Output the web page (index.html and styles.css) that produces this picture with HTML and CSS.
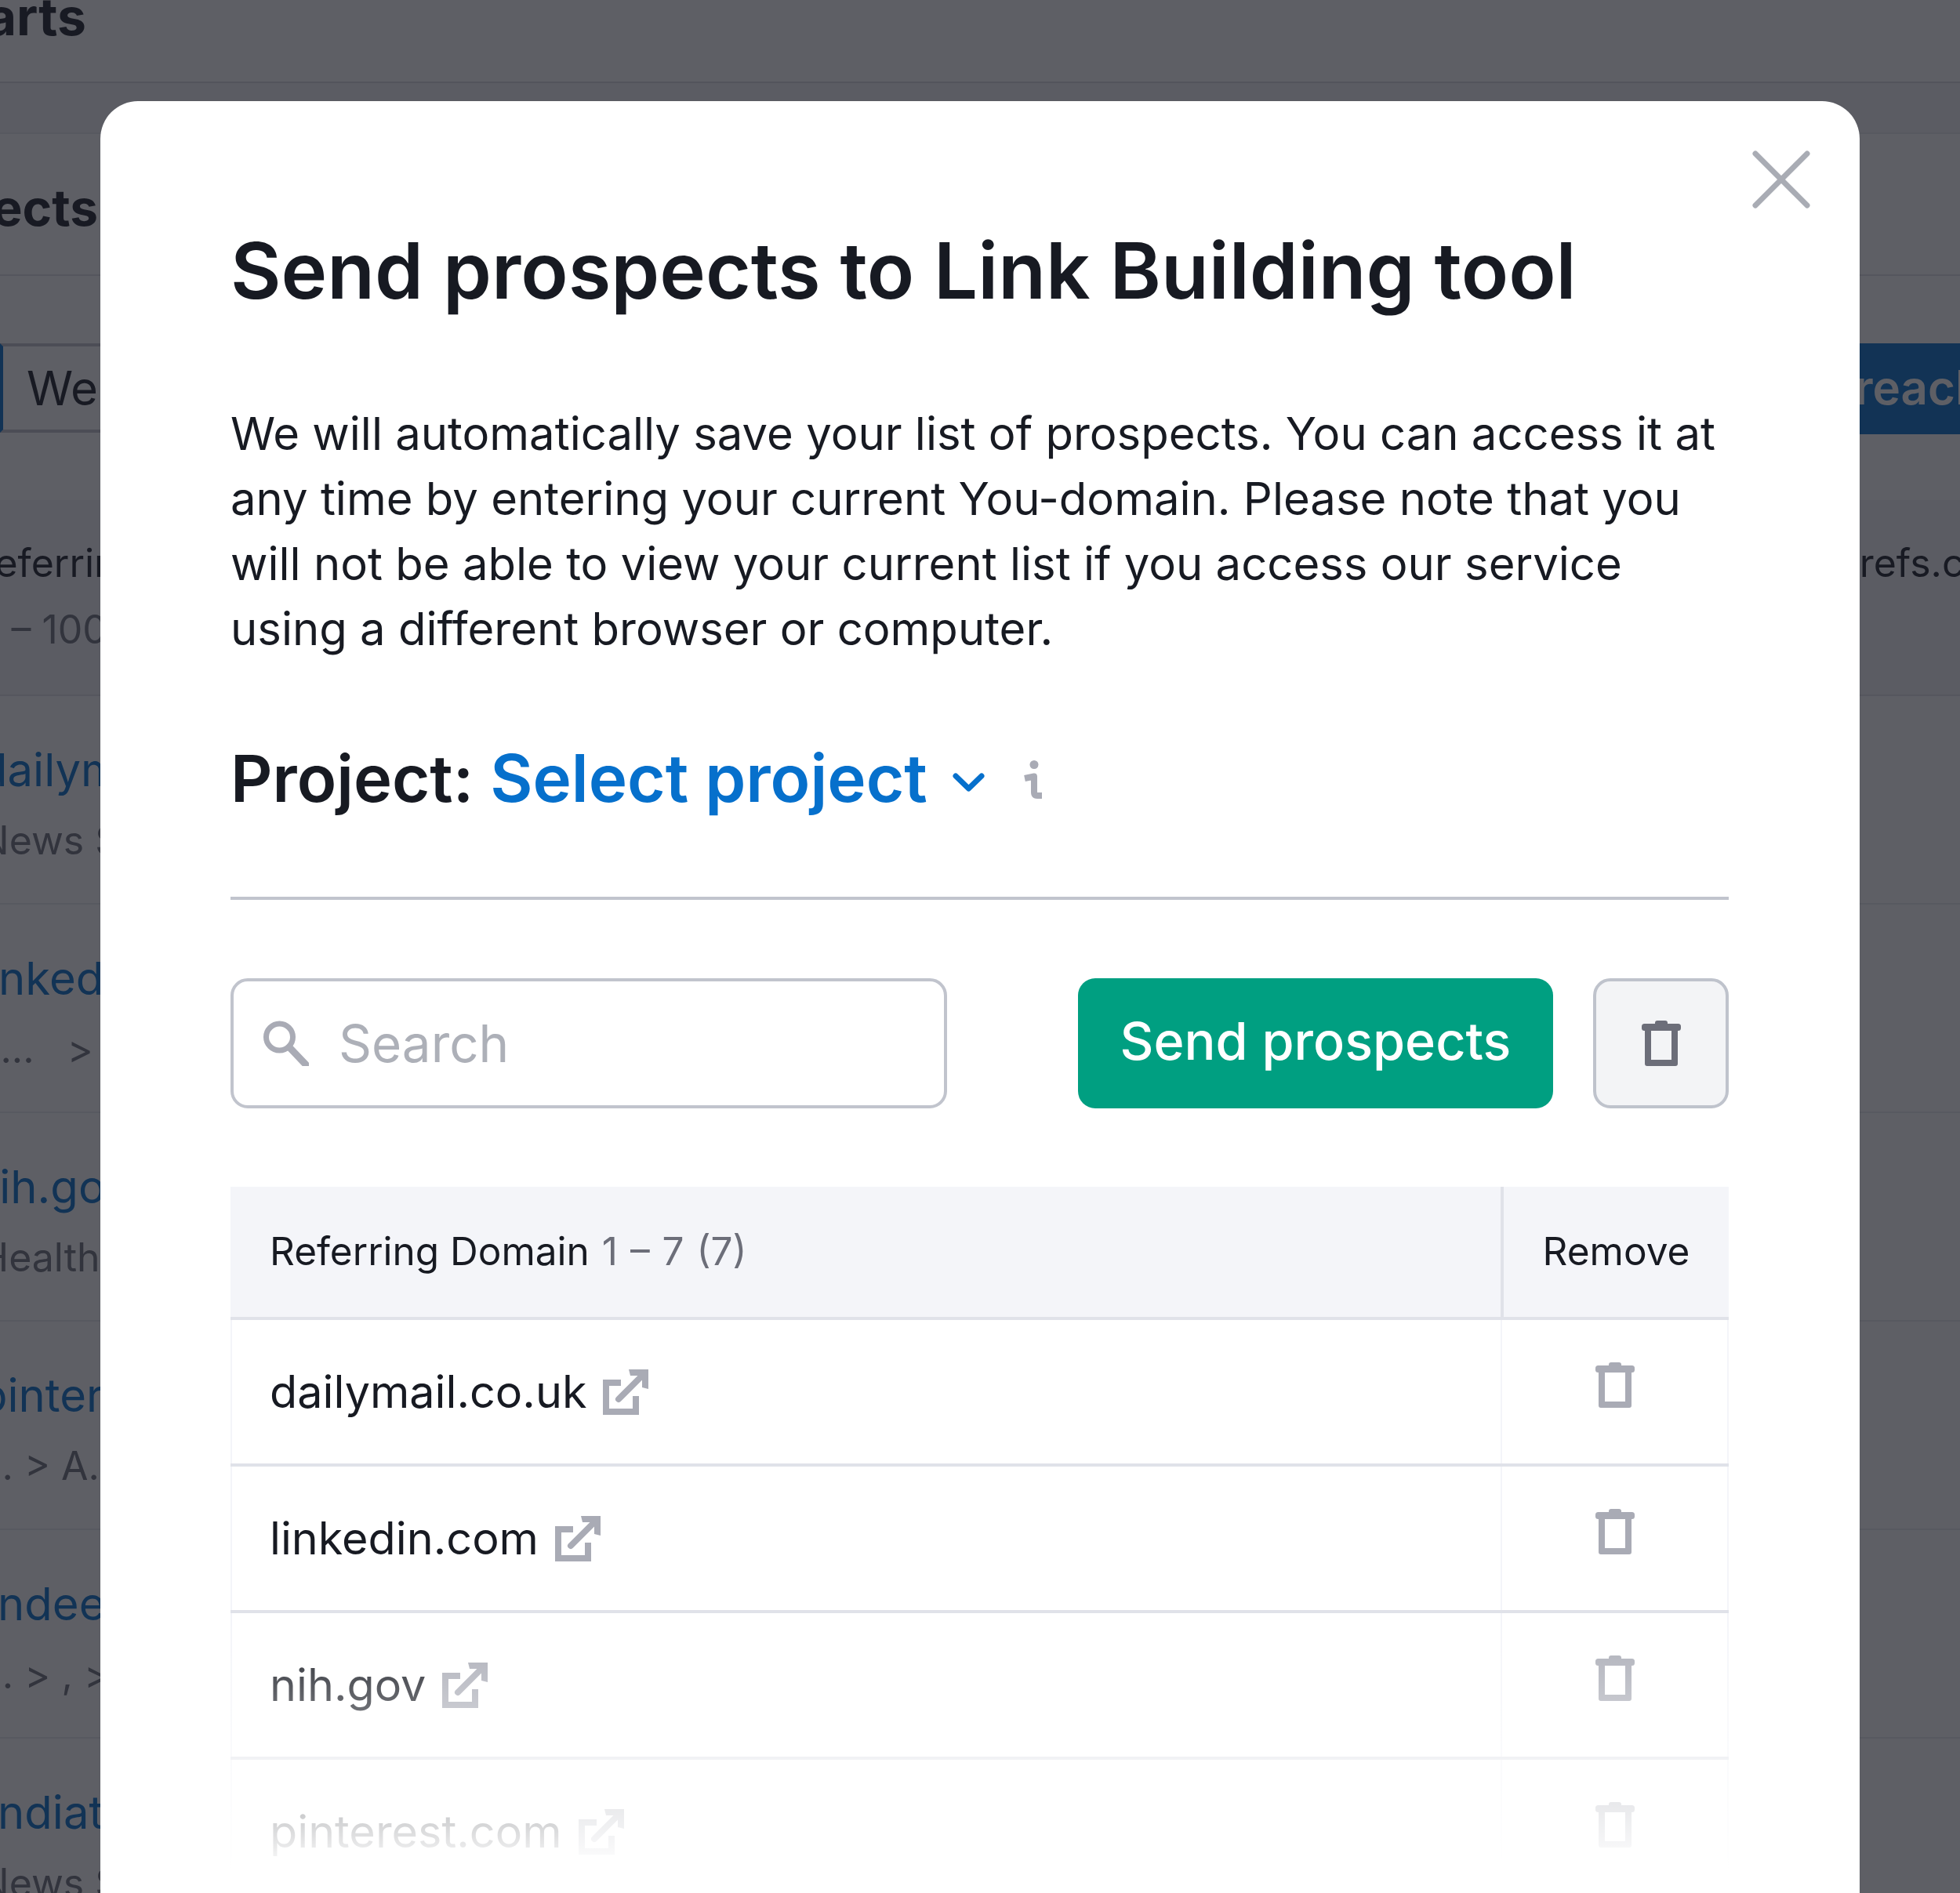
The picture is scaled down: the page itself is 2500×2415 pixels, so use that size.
FILE: index.html
```html
<!DOCTYPE html>
<html lang="en">
<head>
<meta charset="utf-8">
<title>Send prospects to Link Building tool</title>
<link rel="stylesheet" href="styles.css">
</head>
<body>
<svg class="defs" width="0" height="0" aria-hidden="true">
  <symbol id="trash" viewBox="0 0 50 58">
    <rect x="17" y="0" width="16" height="9" rx="3"/>
    <rect x="0" y="4" width="50" height="9" rx="3.5"/>
    <path fill-rule="evenodd" d="M4 10h42v45a3 3 0 0 1-3 3H7a3 3 0 0 1-3-3zM12 13v37h26V13z"/>
  </symbol>
  <symbol id="ext" viewBox="0 0 58 58">
    <path d="M23 17H4v37h38V34" fill="none" stroke="currentColor" stroke-width="8"/>
    <path d="M20 38 48 10" fill="none" stroke="currentColor" stroke-width="8" stroke-linecap="round"/>
    <path d="M33 0h25v25l-8-2V8H35z"/>
  </symbol>
</svg>

<div class="page">
  <header class="page-head"><span class="h-arts">Backlink Charts</span></header>
  <div class="band-thin"></div>
  <section class="page-title"><span class="h-ects">Prospects</span></section>
  <section class="toolbar">
    <div class="fake-input"><span class="fake-value">Weak</span></div>
    <div class="fake-btn"><span>Outreach</span></div>
  </section>
  <section class="page-table-head">
    <div class="hd-left"><div class="hd-ref">Referring Domain</div><div class="hd-range">1 – 100</div></div>
    <div class="hd-right">ahrefs.com</div>
  </section>
  <div class="bg-row"><div class="lnk l1">dailymail.co.uk</div><div class="sub s1">News Sites</div></div>
  <div class="bg-row"><div class="lnk l2">linkedin.com</div><div class="sub s2">s...&nbsp;&nbsp;&nbsp;&gt;</div></div>
  <div class="bg-row"><div class="lnk l3">nih.gov</div><div class="sub s3">Health</div></div>
  <div class="bg-row"><div class="lnk l4">pinterest.com</div><div class="sub s4">S.. &gt; A..</div></div>
  <div class="bg-row"><div class="lnk l5">indeed.com</div><div class="sub s5">... &gt; , &gt;</div></div>
  <div class="bg-row"><div class="lnk l6">indiatimes.com</div><div class="sub s6">News Sites</div></div>
</div>

<div class="overlay">
  <div class="modal">
    <button class="close" aria-label="Close">
      <svg viewBox="0 0 74 74" width="74" height="74"><path d="M4 4 70 70M70 4 4 70"/></svg>
    </button>
    <h1 class="title">Send prospects to Link Building tool</h1>
    <p class="intro">We will automatically save your list of prospects. You can access it at<br>any time by entering your current You-domain. Please note that you<br>will not be able to view your current list if you access our service<br>using a different browser or computer.</p>
    <div class="project">
      <div class="project-row">
        <span class="project-label">Project:</span>
        <span class="project-value">Select project</span>
        <svg class="chev" viewBox="0 0 41 24" width="41" height="24"><path d="M4 4 20.5 20 37 4"/></svg>
        <svg class="info" viewBox="0 0 24 49" width="24" height="49"><circle cx="14" cy="5.5" r="5.5"/><path d="M2 23 14 20.500v20q0 4.500 4 4.500h6"/></svg>
      </div>
    </div>
    <div class="controls">
      <label class="search">
        <svg class="search-ico" viewBox="0 0 58 58" width="58" height="58"><circle cx="20.500" cy="21" r="17"/><path class="handle" d="M33 34 54 56"/></svg>
        <span class="search-ph">Search</span>
      </label>
      <button class="send">Send prospects</button>
      <button class="bin" aria-label="Remove all"><svg class="ico-trash" width="50" height="58"><use href="#trash"/></svg></button>
    </div>
    <div class="table">
      <div class="tr thead">
        <div class="td dom"><span>Referring Domain</span> <span class="range">1 – 7 (7)</span></div>
        <div class="td act">Remove</div>
      </div>
      <div class="tr">
        <div class="td dom"><span>dailymail.co.uk</span><svg class="ico-ext" width="58" height="58"><use href="#ext"/></svg></div>
        <div class="td act"><svg class="ico-row" width="50" height="58"><use href="#trash"/></svg></div>
      </div>
      <div class="tr">
        <div class="td dom"><span>linkedin.com</span><svg class="ico-ext" width="58" height="58"><use href="#ext"/></svg></div>
        <div class="td act"><svg class="ico-row" width="50" height="58"><use href="#trash"/></svg></div>
      </div>
      <div class="tr">
        <div class="td dom"><span>nih.gov</span><svg class="ico-ext" width="58" height="58"><use href="#ext"/></svg></div>
        <div class="td act"><svg class="ico-row" width="50" height="58"><use href="#trash"/></svg></div>
      </div>
      <div class="tr">
        <div class="td dom"><span>pinterest.com</span><svg class="ico-ext" width="58" height="58"><use href="#ext"/></svg></div>
        <div class="td act"><svg class="ico-row" width="50" height="58"><use href="#trash"/></svg></div>
      </div>
    </div>
    <div class="fade"></div>
  </div>
</div>
</body>
</html>
```
FILE: styles.css
```css
* { box-sizing: border-box; }
html, body { margin: 0; height: 100%; overflow: hidden; background: #fff; }
body { position: relative; font-family: Inter, "Liberation Sans", sans-serif; color: #171a22; }
.defs { position: absolute; }

/* page behind the dialog */
.page { height: 2415px; overflow: hidden; }
.page-head { height: 106px; border-bottom: 2px solid #d9dbe2; overflow: hidden; }
.h-arts { display: block; font-size: 66px; font-weight: 700; line-height: 90px; margin: -24px 0 0 -397px; white-space: nowrap; }
.band-thin { height: 65px; background: #f4f5f9; border-bottom: 2px solid #e8e9ef; }
.page-title { height: 181px; border-bottom: 2px solid #e0e2e8; overflow: hidden; }
.h-ects { display: block; font-size: 64px; font-weight: 700; line-height: 80px; padding-top: 54px; margin-left: -191px; white-space: nowrap; }
.toolbar { display: flex; justify-content: space-between; height: 286px; padding-top: 86px; }
.fake-input { width: 1000px; height: 114px; border: 4px solid #c1c4cd; border-left: 4px solid #006dca; padding-left: 30px; line-height: 106px; font-size: 60px; }
.fake-btn { width: 128px; height: 116px; background: #006dca; overflow: hidden; color: #fff; font-size: 60px; font-weight: 600; line-height: 112px; white-space: nowrap; }
.fake-btn span { display: block; margin-left: -110px; }
.page-table-head { display: flex; justify-content: space-between; height: 250px; background: #f4f5f9; border-bottom: 2px solid #e0e2e8; padding-top: 47px; overflow: hidden; font-size: 50px; white-space: nowrap; }
.hd-ref { margin-left: -38px; line-height: 66px; }
.hd-range { margin-left: -20px; margin-top: 27px; line-height: 50px; color: #6c6e79; }
.hd-right { width: 128px; line-height: 66px; padding-left: 0; text-indent: -58px; }
.bg-row { height: 266px; border-bottom: 2px solid #e8e9ef; padding-top: 61px; overflow: hidden; white-space: nowrap; }
.lnk { font-size: 58px; line-height: 66px; color: #006dca; }
.sub { font-size: 50px; line-height: 60px; margin-top: 27px; color: #6c6e79; }
.l1 { margin-left: -26px; }
.l2 { margin-left: -30px; }
.l3 { margin-left: -35px; }
.l4 { margin-left: -26px; }
.l5 { margin-left: -17px; }
.l6 { margin-left: -17px; }
.s1 { margin-left: -26px; }
.s2 { margin-left: -26px; }
.s3 { margin-left: -26px; }
.s4 { margin-left: -44px; }
.s5 { margin-left: -26px; }
.s6 { margin-left: -26px; }

/* dialog */
.overlay { position: absolute; inset: 0; background: rgba(25, 27, 35, .7); overflow: hidden; padding-top: 129px; }
.modal { position: relative; width: 2244px; height: 2400px; margin-left: 128px; background: #fff; border-radius: 48px; padding: 0 167px 0 166px; overflow: hidden; }
.close { position: absolute; top: 63px; right: 63px; width: 74px; height: 74px; padding: 0; border: 0; background: none; }
.close svg { display: block; fill: none; stroke: #a9acb4; stroke-width: 7; stroke-linecap: round; }
.title { margin: 0; padding-top: 156px; font-size: 99.300px; line-height: 120px; font-weight: 600; color: #171a22; white-space: nowrap; }
.intro { margin: 107px 0 0; font-size: 58px; line-height: 83px; font-weight: 400; color: #171a22; white-space: nowrap; }
.project { margin-top: 99px; padding-bottom: 101px; border-bottom: 4px solid #c1c4cd; }
.project-row { display: flex; align-items: center; height: 100px; font-size: 83px; line-height: 100px; font-weight: 600; white-space: nowrap; }
.project-label { color: #171a22; }
.project-value { color: #0670cc; margin-left: 21px; font-size: 83.500px; }
.chev { margin-left: 32px; margin-top: 10px; fill: none; stroke: #0670cc; stroke-width: 7; stroke-linecap: round; stroke-linejoin: round; }
.info { margin-left: 49px; margin-top: 3px; fill: #a9abb5; }
.info path { fill: none; stroke: #a9abb5; stroke-width: 8; stroke-linejoin: round; }
.controls { display: flex; align-items: stretch; height: 166px; margin-top: 100px; }
.search { display: flex; align-items: center; width: 914px; border: 4px solid #c1c4cd; border-radius: 22px; padding-left: 38px; }
.search-ico { fill: none; stroke: #a9abb5; stroke-width: 7; flex: none; }
.search-ico .handle { stroke-width: 9; stroke-linecap: round; }
.search-ph { margin-left: 38px; font-size: 65.500px; color: #adb0b8; }
.send { margin-left: 167px; width: 606px; border: 0; border-radius: 22px; background: #009f81; color: #fff; font: 500 66.500px Inter, "Liberation Sans", sans-serif; padding: 0 0 6px; }
.bin { margin-left: 51px; width: 173px; display: flex; align-items: center; justify-content: center; border: 4px solid #bfc3cc; border-radius: 22px; background: #f3f4f6; padding: 0; }
.ico-trash { fill: #6c6e79; color: #6c6e79; display: block; }
.table { margin-top: 100px; }
.tr { display: flex; height: 187px; border-bottom: 4px solid #e0e2e9; }
.thead { height: 170px; background: #f4f5f9; }
.td { display: flex; align-items: center; }
.dom { flex: 1; padding: 0 0 2px 48px; font-size: 57.500px; border-left: 2px solid #f4f5f9; }
.act { width: 291px; justify-content: center; border-left: 2px solid #f4f5f9; border-right: 2px solid #f4f5f9; }
.thead .td { font-size: 49.500px; padding-bottom: 3px; }
.thead .act { border-left: 4px solid #e0e2e9; border-right: 0; }
.thead .dom { border-left: 0; gap: 16px; padding-left: 50px; }
.range { color: #6c6e79; word-spacing: 2px; }
.ico-ext { margin-left: 21px; margin-top: 2px; fill: #a9abb5; color: #a9abb5; }
.ico-row { fill: #a9abb5; color: #a9abb5; margin-top: -18px; }
.fade { position: absolute; left: 0; right: 0; top: 1931px; height: 355px; background: linear-gradient(rgba(255,255,255,0), #fff 92%); }
```
